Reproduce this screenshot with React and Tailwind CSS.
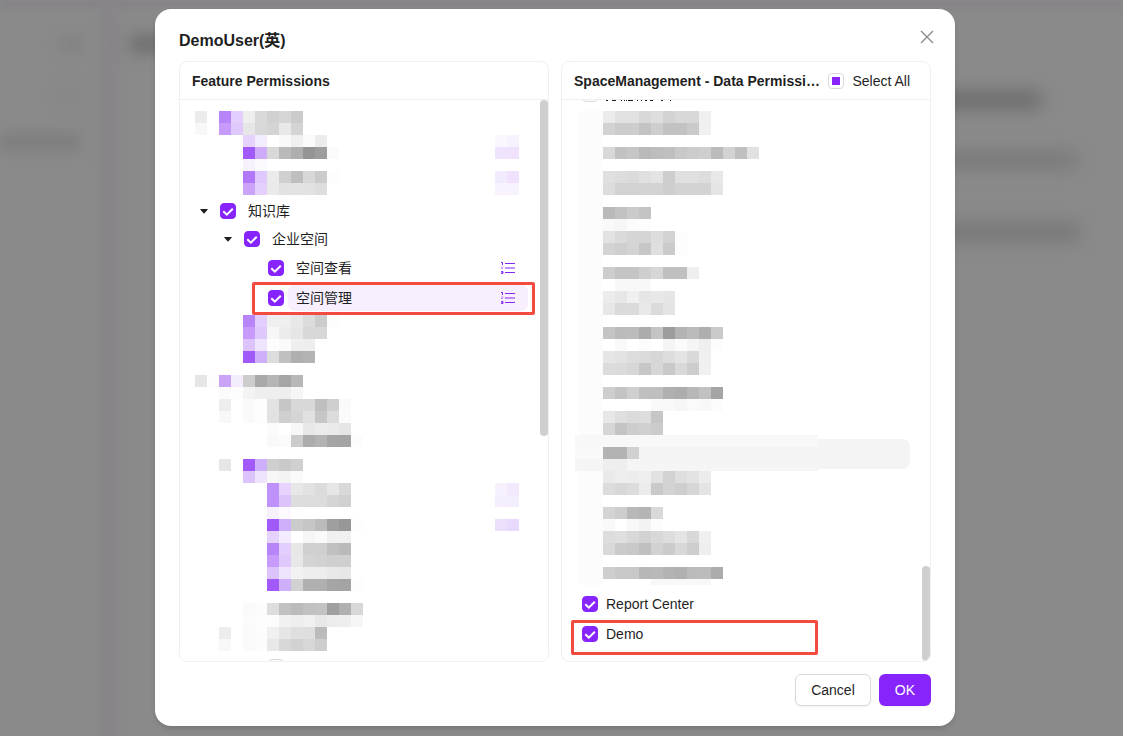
import { useState } from 'react';

// each row: [y in cells, then cell colours]; '.' is an empty cell,
// two letters are a gray, six are a full hex colour, "@n" jumps to column n
const featureTop = [
  [0, 'ec . b884fa e3cffd ee d9 d0 d6 cb'],
  [1, 'f8 . c69bfb dfc9fc e6 d8 d4 e8 d4'],
  [2, '@4 e5d3fe f3ebfe . f9 f0 fb ec @25 faf7fe f7f2fe'],
  [3, '@4 a259fa ceacfa d8 b9 ae 95 9d fb @25 eee4fd f0e2fd'],
  [4, '@4 f7f1fe fcf9ff'],
  [5, '@4 b278fa dfc8fd ea d0 be d8 cb fd @25 f2eafd f0e2fd'],
  [6, '@4 cba4fa e4d0fd ea e2 e3 e2 dd @25 f7f2fe f7f2fe'],
];

const featureBottom = [
  [0, '@4 b884fa e3cffd ef ef e8 dc cc fd'],
  [1, '@4 c69bfb dfc9fc f7 ec e6 d8 d8'],
  [2, '@4 ddc3fb eee4fe fd fa ef ee'],
  [3, '@4 a259fa ceaffb dd c0 af b3'],
  [5, 'e6 fd caa3f8 f4edfc cd a9 b5 a5 b7'],
  [6, '@2 fb fd f3 ee ee ee f6'],
  [7, '@2 ee . fa fd e2 c6 d8 d8 bf cf fa'],
  [8, '@2 f8 . fa fd e2 cf d5 e1 c6 dc fb'],
  [9, '@6 fb . f7 e8 ec ea e6'],
  [10, '@6 f9 fb cc ac b3 a5 a4 fc'],
  [12, '@2 e6 . a259fa ceaffb cf c9 d0'],
  [13, '@4 ddc3fb eee4fe f7 f3 fa'],
  [14, '@6 bf91fb e6d3fe e7 e2 dc e6 d8 @25 f6f1fd f2e9fd'],
  [15, '@6 bf91fb ddc3fb dd dc dc d5 d0 @25 f5effd f4edfd'],
  [16, '@6 f7f1fe fcf9ff'],
  [17, '@6 a259fa ceaffb cb c6 bb 9f 97 fd @25 ecdffc e8d9fd'],
  [18, '@6 e5d3fe f3ebfe . f6 fa f0 f0'],
  [19, '@6 b884fa e3cffd e7 d0 cf c0 ba'],
  [20, '@6 c69bfb dfc9fc e8 d4 d2 cf cf'],
  [21, '@6 ddc3fb eee4fe f2 ee ed e9 e7'],
  [22, '@6 a259fa ceaffb d1 b0 b0 a5 a4 fd'],
  [24, '@4 fa fc dd c1 bb c1 c3 9f b0 d8'],
  [25, '@4 fb fd fc f1 ee f0 e8 ed ee f6'],
  [26, '@2 ed . fa fc f0 e6 df de bb'],
  [27, '@2 f8 . fa fc e8 d8 d2 d7 ce'],
];

const dataRows = [
  [0, '@2 eb e1 e1 d8 de d2 d8 d8 f0'],
  [1, '@2 d2 cc cd c3 ce c2 c2 ca f0'],
  [3, '@2 d8 c2 c6 b9 bd bf c8 cc cf bb d2 bf e1'],
  [5, '@2 e0 dd db e0 e4 cd e0 e0 dd e8'],
  [6, '@2 dd d2 d2 d3 d3 ce d3 d3 d3 e5'],
  [8, '@2 b9 c2 ca c3'],
  [9, '@2 f9 f7 fc fd'],
  [10, '@2 e2 da d5 d5 dd d3 fd'],
  [11, '@2 d3 cf d4 c6 df cb fd'],
  [13, '@2 cd c4 c4 ce d6 bf c0 ef'],
  [14, '@2 . f8 f8 f8'],
  [15, '@2 ec e7 f0 e6 e8 e6'],
  [16, '@2 e7 da db e9 db e4'],
  [18, '@2 c4 bb bc ac c4 9d b3 bb ae ca'],
  [19, '@2 . f9 . fc . f5 fb f5 ef fc'],
  [20, '@2 e6 e3 dd db d6 dd e4 d9 f0'],
  [21, '@2 dc db d7 c7 d7 c9 d9 cd f0'],
  [23, '@2 ce c4 cf bf bf b0 ad b8 c1 a5'],
  [24, '@6 f9 f9 f6 fa f8 fc'],
  [25, '@2 e7 df db dd c6'],
  [26, '@2 d6 c4 cd d0 cb'],
  [28, '@2 b3 b3 d1'],
  [29, '@2 ee ee'],
  [30, '@2 ea ee ec ef e2 d2 de e3 ec'],
  [31, '@2 dc d8 dc ec ca d3 ce d6 e4'],
  [33, '@2 d4 cd b8 b4 d9'],
  [34, '@2 f9 . f8 f3 fc'],
  [35, '@2 dd df d8 d2 d8 dd e4 d8 f0'],
  [36, '@2 d9 cb c8 c0 d2 cb d8 cd ee'],
  [38, '@2 ce c9 c8 b7 b9 b3 b0 bb bc ac'],
];

const CELL = 12;

function Cells({ rows, left = 0 }) {
  return rows.map(([row, line]) => {
    let col = 0;
    return line.split(' ').map(token => {
      if (token.startsWith('@')) {
        col = Number(token.slice(1));
        return null;
      }
      const x = left + col * CELL;
      col += 1;
      if (token === '.') return null;
      const fill = token.length === 2 ? `#${token.repeat(3)}` : `#${token}`;
      return (
        <rect
          key={`${row}-${x}`}
          x={x}
          y={row * CELL}
          width={CELL}
          height={CELL}
          fill={fill}
          shapeRendering="crispEdges"
        />
      );
    });
  });
}

function Checkbox({ id, label, checked, partial, onChange }) {
  return (
    <span className="relative block size-4 shrink-0">
      <input
        id={id}
        type="checkbox"
        aria-label={label}
        checked={checked}
        onChange={onChange}
        className="peer block size-4 cursor-pointer appearance-none rounded border border-[#d9d9d9] bg-white checked:border-[#8624fb] checked:bg-[#8624fb]"
      />
      {partial && !checked && (
        <span className="pointer-events-none absolute inset-1 bg-[#8624fb]" />
      )}
      <svg
        viewBox="0 0 16 16"
        className="pointer-events-none absolute inset-0 hidden size-4 peer-checked:block"
        fill="none"
        stroke="white"
        strokeWidth="2"
      >
        <path d="M3.3 8.3 6.8 11.7l6-6" />
      </svg>
    </span>
  );
}

function Caret() {
  return (
    <button type="button" aria-label="Collapse" className="block w-2 cursor-pointer">
      <svg viewBox="0 0 8 5" className="h-[5px] w-2" fill="#1f1f1f">
        <path d="M.6 0h6.8q.6 0 .3.5L4.5 4.3q-.5.5-1 0L.3.5Q0 0 .6 0Z" />
      </svg>
    </button>
  );
}

function ListIcon() {
  return (
    <svg viewBox="0 0 14 12" className="h-3 w-3.5" fill="none" stroke="#8624fb">
      <path d="M4 1.5h10M4 10.5h10" />
      <path d="M4 6h10" strokeWidth="2" opacity=".5" />
      <path d="M0 .5h1.5V3" />
      <path d="M0 5h2.5M0 6.5h2" opacity=".5" />
      <path d="M0 9.5h2v2H0M.5 10.5H2" opacity=".9" />
    </svg>
  );
}

function Permission({ id, label, checked, active, onChange }) {
  return (
    <div className="relative flex h-[30px] items-center gap-1 pr-5 pl-[88px]">
      <Checkbox id={id} checked={checked} onChange={onChange} />
      <div
        className={`flex h-[26px] flex-1 items-center justify-between rounded-md pr-[13px] pl-2 ${
          active ? 'bg-[#f7effe]' : ''
        }`}
      >
        <label htmlFor={id}>{label}</label>
        <button type="button" aria-label="Data permissions" className="cursor-pointer">
          <ListIcon />
        </button>
      </div>
      {active && (
        <span className="pointer-events-none absolute -top-px right-[13px] -bottom-0.5 left-[72px] rounded-xs border-3 border-[#f34b3f]" />
      )}
    </div>
  );
}

function PageBehind() {
  return (
    <div aria-hidden="true" className="absolute inset-0 overflow-hidden bg-[#8a8a8a]">
      <div className="h-2 bg-[#868387] blur-[3px]" />
      <div className="flex h-full">
        <div className="flex w-[100px] flex-col pt-7">
          <div className="ml-[60px] h-4 w-5 bg-[#808080] blur-[8px]" />
          <div className="mt-9 ml-[60px] h-4 w-5 bg-[#848484] blur-[8px]" />
          <div className="mt-7 h-5 w-20 bg-[#7f7f7f] blur-[6px]" />
        </div>
        <div className="w-[18px] bg-[#888589] blur-[4px]" />
        <div className="flex flex-1 justify-between">
          <div className="mt-7 ml-3 h-4 w-20 bg-[#6c6c6c] blur-[8px]" />
          <div className="w-[200px] pt-[84px]">
            <div className="h-4 w-[118px] bg-[#686868] blur-[9px]" />
            <div className="mt-11 h-4 w-[154px] bg-[#787878] blur-[9px]" />
            <div className="mt-14 h-4 w-[156px] bg-[#747474] blur-[9px]" />
          </div>
        </div>
      </div>
    </div>
  );
}

export default function App() {
  const [checked, setChecked] = useState({
    knowledge: true,
    space: true,
    view: true,
    manage: true,
    report: true,
    demo: true,
    all: false,
    nextFeature: false,
    previousData: false,
  });

  const bind = id => ({
    id,
    checked: checked[id],
    onChange: () => setChecked(prev => ({ ...prev, [id]: !prev[id] })),
  });

  return (
    <div className="relative min-h-screen overflow-hidden pt-[9px] pr-[13px] pb-2.5 font-['Liberation_Sans','Noto_Sans_CJK_SC',sans-serif] text-sm text-[#1f1f1f]">
      <PageBehind />
      <div
        role="dialog"
        aria-labelledby="dialog-title"
        className="relative mx-auto max-w-[800px] rounded-2xl bg-white px-6 py-5 shadow-md"
      >
        <div className="mb-2 flex h-6 items-center justify-between">
          <h2 id="dialog-title" className="text-base font-bold">
            DemoUser(英)
          </h2>
          <button
            type="button"
            aria-label="Close"
            className="-mt-2 -mr-1 cursor-pointer p-px text-[#8c8c8c]"
          >
            <svg viewBox="0 0 14 14" className="size-3.5" stroke="currentColor" strokeWidth="1.4">
              <path d="m1 1 12 12M13 1 1 13" />
            </svg>
          </button>
        </div>

        <div className="grid grid-cols-2 gap-3">
          <section className="overflow-hidden rounded-lg border border-[#f0f0f0]">
            <h3 className="h-[38px] border-b border-[#f0f0f0] px-3 leading-[38px] font-bold">
              Feature Permissions
            </h3>
            <div className="relative h-[561px] overflow-hidden pt-[11px]">
              <svg viewBox="0 0 324 84" className="ml-[15px] h-[84px] w-[324px]">
                <Cells rows={featureTop} />
              </svg>
              <div className="flex h-8 items-center gap-3 pl-5">
                <Caret />
                <Checkbox {...bind('knowledge')} />
                <label htmlFor="knowledge">知识库</label>
              </div>
              <div className="mb-0.5 flex h-6 items-center gap-3 pl-11">
                <Caret />
                <Checkbox {...bind('space')} />
                <label htmlFor="space">企业空间</label>
              </div>
              <Permission label="空间查看" {...bind('view')} />
              <Permission label="空间管理" active {...bind('manage')} />
              <svg viewBox="0 0 324 336" className="mt-0.5 ml-[15px] h-[336px] w-[324px]">
                <Cells rows={featureBottom} />
              </svg>
              <div className="mt-2 pl-[88px]">
                <Checkbox label="Next feature" {...bind('nextFeature')} />
              </div>
              <span className="absolute top-0 right-0 h-[336px] w-2 rounded-full bg-[#cfcfcf]" />
            </div>
          </section>

          <section className="overflow-hidden rounded-lg border border-[#f0f0f0]">
            <div className="flex h-[38px] items-center gap-2 border-b border-[#f0f0f0] pr-5 pl-3">
              <h3 className="min-w-0 flex-1 truncate font-bold">
                SpaceManagement - Data Permissions
              </h3>
              <Checkbox partial {...bind('all')} />
              <label htmlFor="all">Select All</label>
            </div>
            <div className="relative h-[561px] overflow-hidden pt-[11px] pr-5 pl-3">
              {/* tail of the entry scrolled out above */}
              <div className="absolute -top-3.5 left-5 flex items-end gap-2">
                <Checkbox label="Previous entry" {...bind('previousData')} />
                <svg viewBox="0 0 66 2" className="h-0.5 w-[66px]" stroke="#1f1f1f">
                  <path d="M0 .5h2M6 .5h4M15 .5h1M18 .5h1M20 .5h1M22 .5h5M31 .5h1M35 .5h1M39 .5h2M44 .5h3M55 .5h2M64 .5h1" />
                </svg>
              </div>
              <svg viewBox="0 0 336 474" className="h-[474px] w-[336px]">
                <rect x="5" width="24" height="474" fill="#fcfcfc" />
                <rect x="8" y="328" width="328" height="30" rx="8" fill="#f4f4f4" />
                <rect x="1" y="324" width="243" height="12" fill="#f8f8f8" />
                <rect x="1" y="336" width="28" height="12" fill="#f9f9f9" />
                <rect x="1" y="348" width="243" height="12" fill="#f5f5f5" />
                <rect x="77" y="468" width="60" height="6" fill="#f8f8f8" />
                <Cells rows={dataRows} left={5} />
              </svg>
              <div className="mt-1 flex h-[30px] items-center gap-2 pl-2">
                <Checkbox {...bind('report')} />
                <label htmlFor="report">Report Center</label>
              </div>
              <div className="relative flex h-[30px] items-center gap-2 pl-2">
                <Checkbox {...bind('demo')} />
                <label htmlFor="demo">Demo</label>
                <span className="pointer-events-none absolute top-px -bottom-1.5 -left-[3px] w-[247px] rounded-xs border-3 border-[#f34b3f]" />
              </div>
              <span className="absolute right-0 bottom-0 h-[95px] w-2 rounded-full bg-[#cfcfcf]" />
            </div>
          </section>
        </div>

        <div className="mt-3 flex justify-end gap-2">
          <button
            type="button"
            className="h-8 cursor-pointer rounded-md border border-[#d9d9d9] bg-white px-[15px] shadow-xs"
          >
            Cancel
          </button>
          <button
            type="button"
            className="h-8 cursor-pointer rounded-md bg-[#8624fb] px-4 text-white shadow-xs"
          >
            OK
          </button>
        </div>
      </div>
    </div>
  );
}
